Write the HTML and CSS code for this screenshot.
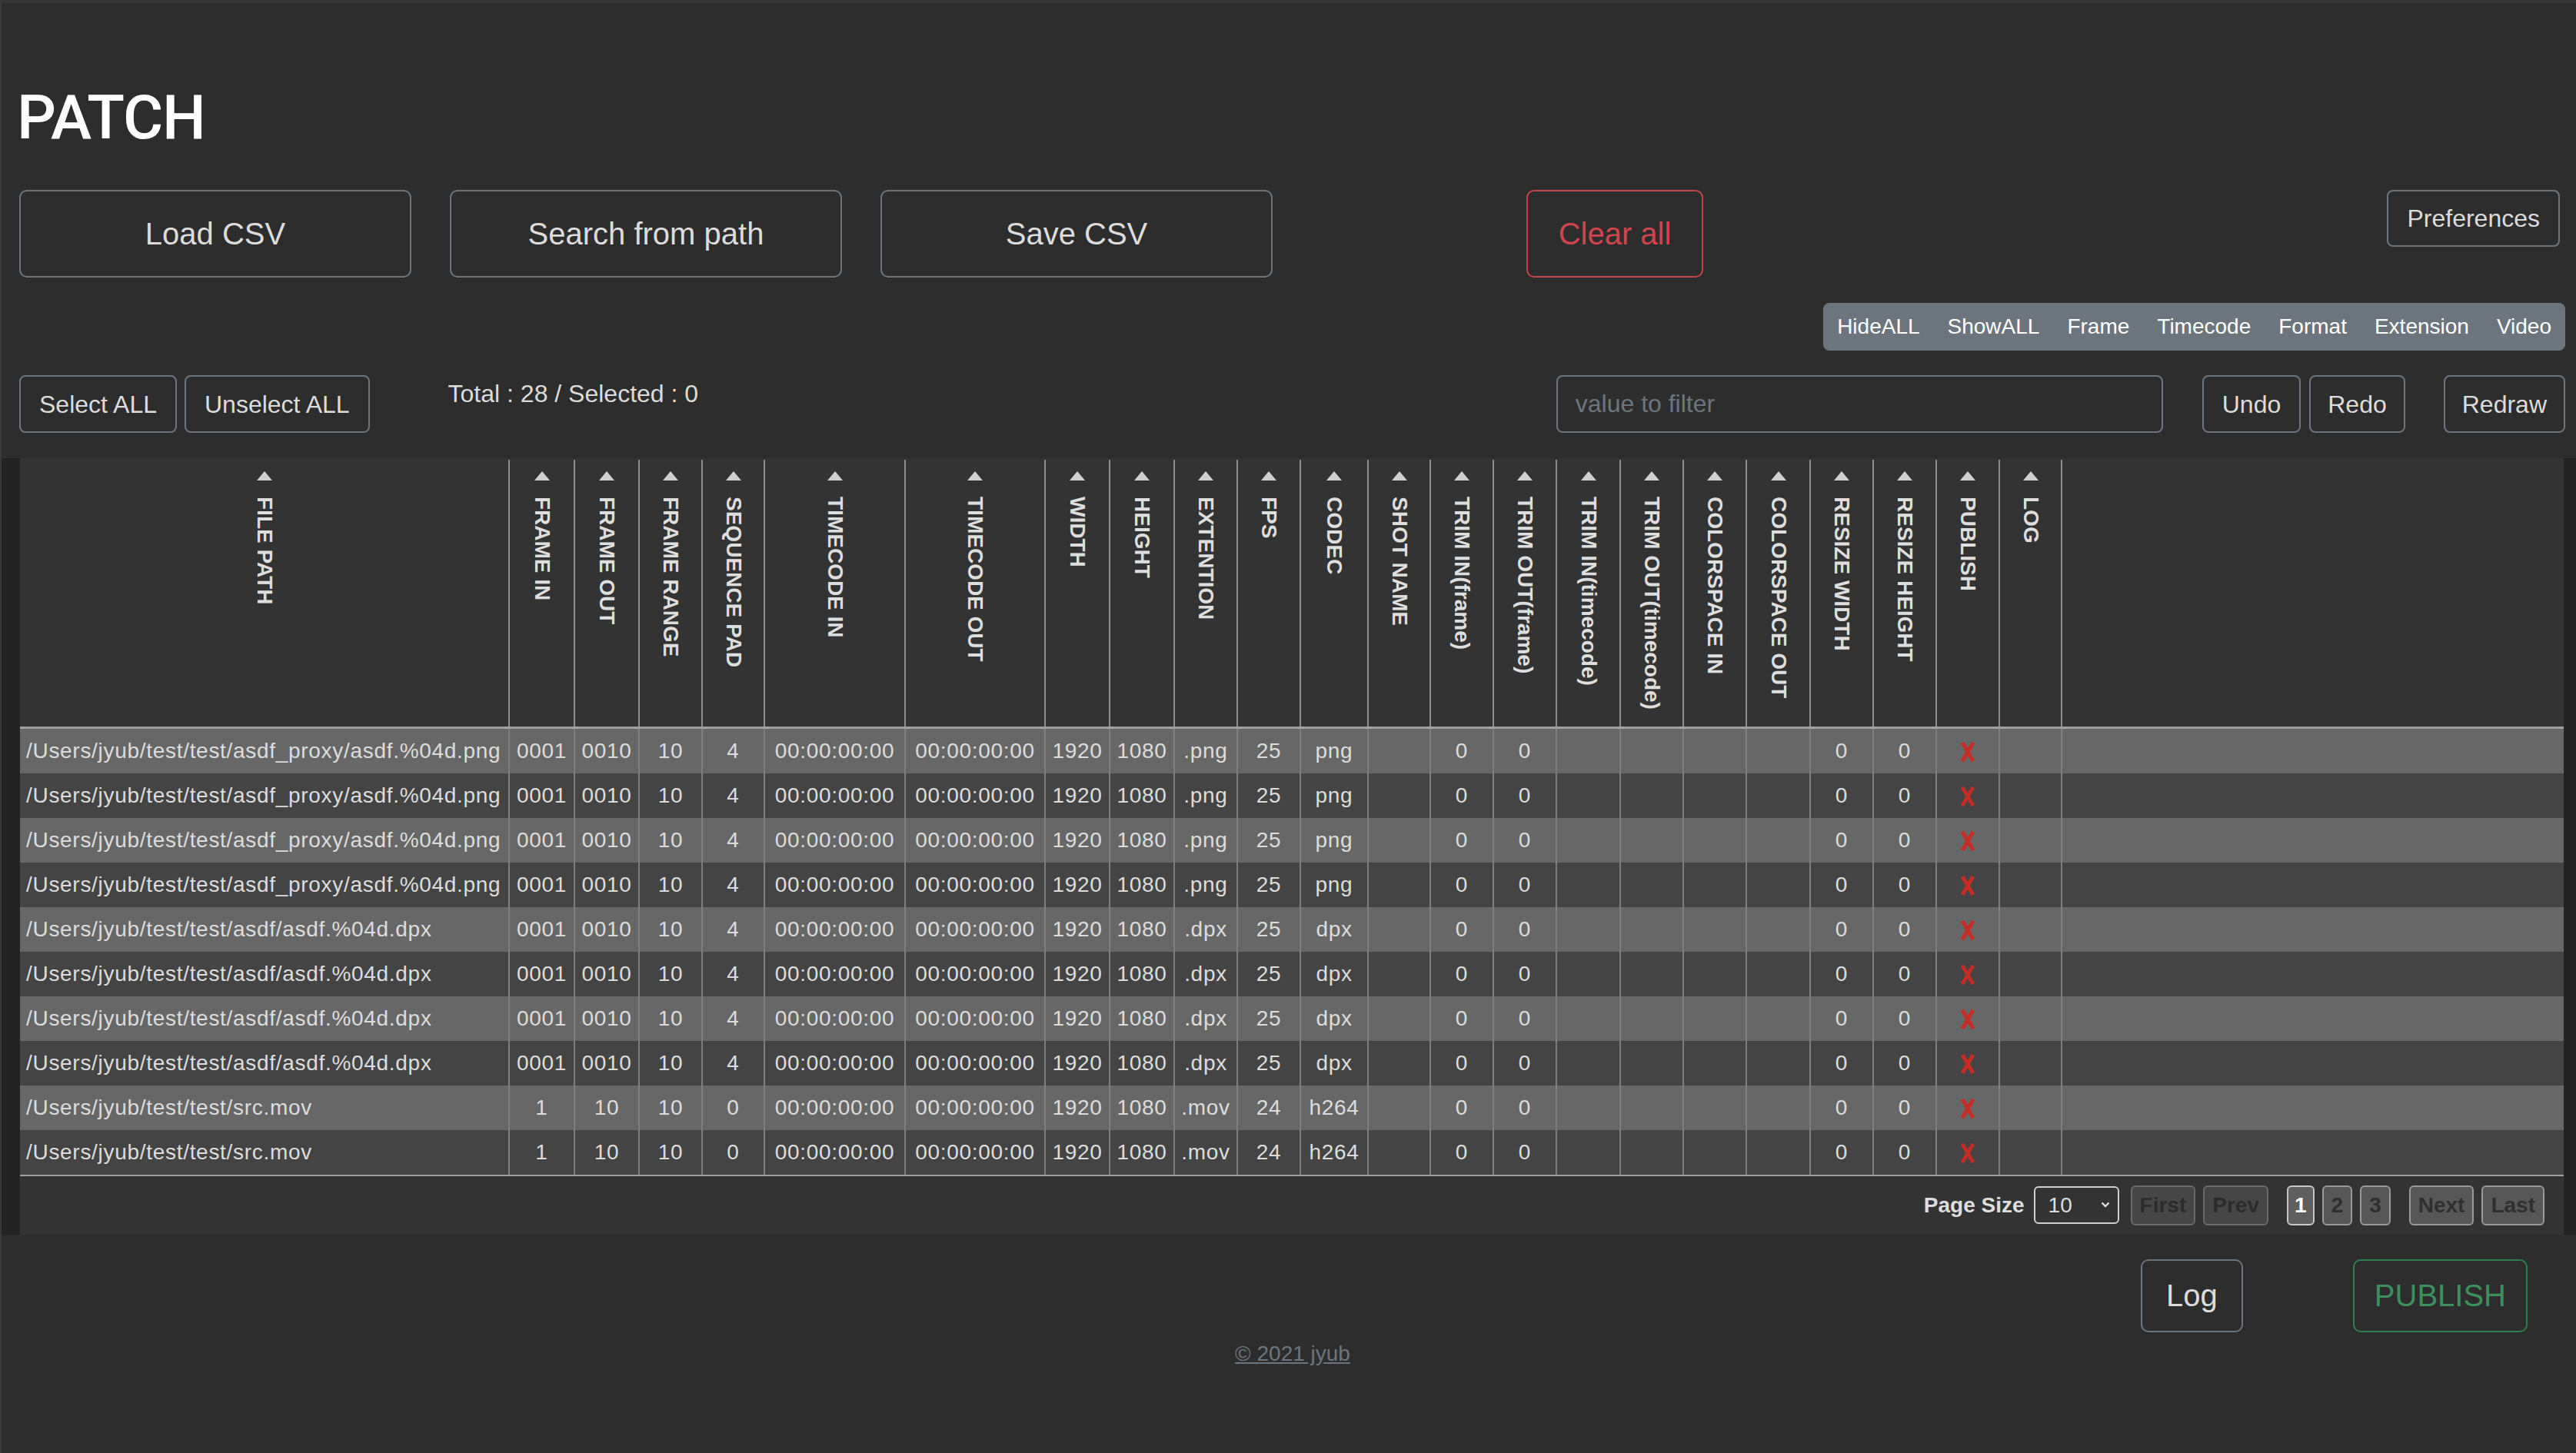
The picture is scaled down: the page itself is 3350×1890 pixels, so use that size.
FILE: index.html
```html
<!DOCTYPE html>
<html lang="en">
<head>
<meta charset="utf-8">
<title>PATCH</title>
<link rel="stylesheet" href="styles.css">
</head>
<body>
<div class="app">
  <div class="top">
    <h1 class="title">PATCH</h1>
    <div class="row-main">
      <button class="btn btn-main">Load CSV</button>
      <button class="btn btn-main">Search from path</button>
      <button class="btn btn-main">Save CSV</button>
      <button class="btn btn-main btn-danger">Clear all</button>
      <button class="btn btn-std btn-pref">Preferences</button>
    </div>
    <div class="row-group">
      <div class="group">
        <button class="gbtn">HideALL</button><button class="gbtn">ShowALL</button><button class="gbtn">Frame</button><button class="gbtn">Timecode</button><button class="gbtn">Format</button><button class="gbtn">Extension</button><button class="gbtn">Video</button>
      </div>
    </div>
    <div class="row-tools">
      <button class="btn btn-std">Select ALL</button>
      <button class="btn btn-std btn-unsel">Unselect ALL</button>
      <span class="total">Total : 28 / Selected : 0</span>
      <input class="filter" type="text" placeholder="value to filter">
      <button class="btn btn-std btn-undo">Undo</button>
      <button class="btn btn-std btn-redo">Redo</button>
      <button class="btn btn-std btn-redraw">Redraw</button>
    </div>
  </div>

  <div class="table-wrap">
    <div class="panel">
      <table class="grid">
        <colgroup>
          <col class="w-path"><col class="w85"><col class="w84"><col class="w82"><col class="w81"><col class="w183"><col class="w182"><col class="w84"><col class="w84"><col class="w82"><col class="w82"><col class="w88"><col class="w81"><col class="w82"><col class="w82"><col class="w83"><col class="w82"><col class="w82"><col class="w83"><col class="w82"><col class="w82"><col class="w82"><col class="w81"><col>
        </colgroup>
        <thead>
          <tr class="head-row">
            <th><div class="hd"><span class="caret"></span><span class="vt">FILE PATH</span></div></th>
            <th><div class="hd"><span class="caret"></span><span class="vt">FRAME IN</span></div></th>
            <th><div class="hd"><span class="caret"></span><span class="vt">FRAME OUT</span></div></th>
            <th><div class="hd"><span class="caret"></span><span class="vt">FRAME RANGE</span></div></th>
            <th><div class="hd"><span class="caret"></span><span class="vt">SEQUENCE PAD</span></div></th>
            <th><div class="hd"><span class="caret"></span><span class="vt">TIMECODE IN</span></div></th>
            <th><div class="hd"><span class="caret"></span><span class="vt">TIMECODE OUT</span></div></th>
            <th><div class="hd"><span class="caret"></span><span class="vt">WIDTH</span></div></th>
            <th><div class="hd"><span class="caret"></span><span class="vt">HEIGHT</span></div></th>
            <th><div class="hd"><span class="caret"></span><span class="vt">EXTENTION</span></div></th>
            <th><div class="hd"><span class="caret"></span><span class="vt">FPS</span></div></th>
            <th><div class="hd"><span class="caret"></span><span class="vt">CODEC</span></div></th>
            <th><div class="hd"><span class="caret"></span><span class="vt">SHOT NAME</span></div></th>
            <th><div class="hd"><span class="caret"></span><span class="vt">TRIM IN(frame)</span></div></th>
            <th><div class="hd"><span class="caret"></span><span class="vt">TRIM OUT(frame)</span></div></th>
            <th><div class="hd"><span class="caret"></span><span class="vt">TRIM IN(timecode)</span></div></th>
            <th><div class="hd"><span class="caret"></span><span class="vt">TRIM OUT(timecode)</span></div></th>
            <th><div class="hd"><span class="caret"></span><span class="vt">COLORSPACE IN</span></div></th>
            <th><div class="hd"><span class="caret"></span><span class="vt">COLORSPACE OUT</span></div></th>
            <th><div class="hd"><span class="caret"></span><span class="vt">RESIZE WIDTH</span></div></th>
            <th><div class="hd"><span class="caret"></span><span class="vt">RESIZE HEIGHT</span></div></th>
            <th><div class="hd"><span class="caret"></span><span class="vt">PUBLISH</span></div></th>
            <th><div class="hd"><span class="caret"></span><span class="vt">LOG</span></div></th>
            <th class="fill"></th>
          </tr>
        </thead>
        <tbody>
          <tr><td class="path">/Users/jyub/test/test/asdf_proxy/asdf.%04d.png</td><td>0001</td><td>0010</td><td>10</td><td>4</td><td>00:00:00:00</td><td>00:00:00:00</td><td>1920</td><td>1080</td><td>.png</td><td>25</td><td>png</td><td></td><td>0</td><td>0</td><td></td><td></td><td></td><td></td><td>0</td><td>0</td><td><svg class="xmark" viewBox="0 0 24 28"><path d="M5 2 L19 26 M19 2 L5 26"/></svg></td><td></td><td class="fill"></td></tr>
          <tr><td class="path">/Users/jyub/test/test/asdf_proxy/asdf.%04d.png</td><td>0001</td><td>0010</td><td>10</td><td>4</td><td>00:00:00:00</td><td>00:00:00:00</td><td>1920</td><td>1080</td><td>.png</td><td>25</td><td>png</td><td></td><td>0</td><td>0</td><td></td><td></td><td></td><td></td><td>0</td><td>0</td><td><svg class="xmark" viewBox="0 0 24 28"><path d="M5 2 L19 26 M19 2 L5 26"/></svg></td><td></td><td class="fill"></td></tr>
          <tr><td class="path">/Users/jyub/test/test/asdf_proxy/asdf.%04d.png</td><td>0001</td><td>0010</td><td>10</td><td>4</td><td>00:00:00:00</td><td>00:00:00:00</td><td>1920</td><td>1080</td><td>.png</td><td>25</td><td>png</td><td></td><td>0</td><td>0</td><td></td><td></td><td></td><td></td><td>0</td><td>0</td><td><svg class="xmark" viewBox="0 0 24 28"><path d="M5 2 L19 26 M19 2 L5 26"/></svg></td><td></td><td class="fill"></td></tr>
          <tr><td class="path">/Users/jyub/test/test/asdf_proxy/asdf.%04d.png</td><td>0001</td><td>0010</td><td>10</td><td>4</td><td>00:00:00:00</td><td>00:00:00:00</td><td>1920</td><td>1080</td><td>.png</td><td>25</td><td>png</td><td></td><td>0</td><td>0</td><td></td><td></td><td></td><td></td><td>0</td><td>0</td><td><svg class="xmark" viewBox="0 0 24 28"><path d="M5 2 L19 26 M19 2 L5 26"/></svg></td><td></td><td class="fill"></td></tr>
          <tr><td class="path">/Users/jyub/test/test/asdf/asdf.%04d.dpx</td><td>0001</td><td>0010</td><td>10</td><td>4</td><td>00:00:00:00</td><td>00:00:00:00</td><td>1920</td><td>1080</td><td>.dpx</td><td>25</td><td>dpx</td><td></td><td>0</td><td>0</td><td></td><td></td><td></td><td></td><td>0</td><td>0</td><td><svg class="xmark" viewBox="0 0 24 28"><path d="M5 2 L19 26 M19 2 L5 26"/></svg></td><td></td><td class="fill"></td></tr>
          <tr><td class="path">/Users/jyub/test/test/asdf/asdf.%04d.dpx</td><td>0001</td><td>0010</td><td>10</td><td>4</td><td>00:00:00:00</td><td>00:00:00:00</td><td>1920</td><td>1080</td><td>.dpx</td><td>25</td><td>dpx</td><td></td><td>0</td><td>0</td><td></td><td></td><td></td><td></td><td>0</td><td>0</td><td><svg class="xmark" viewBox="0 0 24 28"><path d="M5 2 L19 26 M19 2 L5 26"/></svg></td><td></td><td class="fill"></td></tr>
          <tr><td class="path">/Users/jyub/test/test/asdf/asdf.%04d.dpx</td><td>0001</td><td>0010</td><td>10</td><td>4</td><td>00:00:00:00</td><td>00:00:00:00</td><td>1920</td><td>1080</td><td>.dpx</td><td>25</td><td>dpx</td><td></td><td>0</td><td>0</td><td></td><td></td><td></td><td></td><td>0</td><td>0</td><td><svg class="xmark" viewBox="0 0 24 28"><path d="M5 2 L19 26 M19 2 L5 26"/></svg></td><td></td><td class="fill"></td></tr>
          <tr><td class="path">/Users/jyub/test/test/asdf/asdf.%04d.dpx</td><td>0001</td><td>0010</td><td>10</td><td>4</td><td>00:00:00:00</td><td>00:00:00:00</td><td>1920</td><td>1080</td><td>.dpx</td><td>25</td><td>dpx</td><td></td><td>0</td><td>0</td><td></td><td></td><td></td><td></td><td>0</td><td>0</td><td><svg class="xmark" viewBox="0 0 24 28"><path d="M5 2 L19 26 M19 2 L5 26"/></svg></td><td></td><td class="fill"></td></tr>
          <tr><td class="path">/Users/jyub/test/test/src.mov</td><td>1</td><td>10</td><td>10</td><td>0</td><td>00:00:00:00</td><td>00:00:00:00</td><td>1920</td><td>1080</td><td>.mov</td><td>24</td><td>h264</td><td></td><td>0</td><td>0</td><td></td><td></td><td></td><td></td><td>0</td><td>0</td><td><svg class="xmark" viewBox="0 0 24 28"><path d="M5 2 L19 26 M19 2 L5 26"/></svg></td><td></td><td class="fill"></td></tr>
          <tr><td class="path">/Users/jyub/test/test/src.mov</td><td>1</td><td>10</td><td>10</td><td>0</td><td>00:00:00:00</td><td>00:00:00:00</td><td>1920</td><td>1080</td><td>.mov</td><td>24</td><td>h264</td><td></td><td>0</td><td>0</td><td></td><td></td><td></td><td></td><td>0</td><td>0</td><td><svg class="xmark" viewBox="0 0 24 28"><path d="M5 2 L19 26 M19 2 L5 26"/></svg></td><td></td><td class="fill"></td></tr>
        </tbody>
      </table>
      <div class="pager">
        <span class="pg-label">Page Size</span>
        <span class="select-wrap">
          <select class="pg-select"><option>10</option><option>25</option><option>50</option></select>
          <svg class="chev" viewBox="0 0 12 8"><path d="M1.5 1.5 L6 6 L10.5 1.5"/></svg>
        </span>
        <button class="pg pg-off">First</button>
        <button class="pg pg-off">Prev</button>
        <button class="pg pg-num pg-active pg-gap">1</button>
        <button class="pg pg-num">2</button>
        <button class="pg pg-num">3</button>
        <button class="pg pg-gap">Next</button>
        <button class="pg">Last</button>
      </div>
    </div>
  </div>

  <div class="actions">
    <button class="btn btn-lg">Log</button>
    <button class="btn btn-lg btn-success">PUBLISH</button>
  </div>
  <footer class="footer"><a class="copy" href="#">© 2021 jyub</a></footer>
</div>
</body>
</html>
```

FILE: styles.css
```css
* { box-sizing: border-box; }

html, body { margin: 0; padding: 0; }

body {
  background: #2d2d2d;
  color: #dcdcdc;
  font-family: "Liberation Sans", Arial, sans-serif;
  width: 3350px;
}

.app {
  min-height: 1890px;
  border-top: 4px solid #363636;
  border-left: 2px solid #3a3a3a;
}

.top {
  padding: 101px 14px 0 23px;
}

.title {
  margin: 0 0 0 -3px;
  font-family: Roboto, "Liberation Sans", sans-serif;
  font-weight: 500;
  font-size: 80px;
  line-height: 96px;
  letter-spacing: -1px;
  color: #ffffff;
}

.btn {
  background: transparent;
  border: 2px solid #6c757d;
  color: #dcdcdc;
  font-family: "Liberation Sans", Arial, sans-serif;
  display: inline-flex;
  align-items: center;
  justify-content: center;
  white-space: nowrap;
  margin: 0;
  cursor: pointer;
}

.row-main {
  display: flex;
  align-items: flex-start;
  margin-top: 46px;
}

.btn-main {
  width: 510px;
  height: 114px;
  font-size: 40px;
  line-height: 60px;
  border-radius: 10px;
  margin-right: 50px;
}

.btn-danger {
  width: 230px;
  margin-left: 280px;
  margin-right: 0;
  border-color: #c9434b;
  color: #d2444c;
}

.btn-std {
  height: 75px;
  padding: 0 24px;
  font-size: 32px;
  line-height: 48px;
  border-radius: 8px;
}

.btn-pref {
  margin-left: auto;
  margin-right: 7px;
  height: 74px;
}

.row-group {
  display: flex;
  justify-content: flex-end;
  margin-top: 33px;
}

.group {
  display: flex;
}

.gbtn {
  height: 62px;
  padding: 0 16px;
  font-family: "Liberation Sans", Arial, sans-serif;
  font-size: 28px;
  line-height: 42px;
  background: #6c757d;
  border: 2px solid #6c757d;
  color: #ffffff;
  margin: 0;
}

.gbtn:first-child { border-radius: 8px 0 0 8px; }
.gbtn:last-child { border-radius: 0 8px 8px 0; }

.row-tools {
  display: flex;
  align-items: flex-start;
  margin-top: 32px;
}

.btn-unsel { margin-left: 10px; }

.total {
  margin-left: 102px;
  font-size: 32px;
  line-height: 48px;
  color: #dcdcdc;
}

.filter {
  margin-left: auto;
  width: 789px;
  height: 75px;
  padding: 0 23px;
  background: transparent;
  border: 2px solid #6c757d;
  border-radius: 8px;
  color: #dcdcdc;
  font-family: "Liberation Sans", Arial, sans-serif;
  font-size: 32px;
  outline: none;
}

.filter::placeholder { color: #6c757d; }

.btn-undo { margin-left: 51px; }
.btn-redo { margin-left: 11px; padding: 0 22px; }
.btn-redraw { margin-left: 50px; padding: 0 22px; }

/* table */
.table-wrap {
  margin-top: 33px;
  background: #232323;
  padding: 0 16px 0 24px;
}

.panel {
  background: #333333;
  padding-top: 2px;
}

.grid {
  width: 100%;
  table-layout: fixed;
  border-collapse: collapse;
}

.w-path { width: 636px; }
.w85 { width: 85px; }
.w84 { width: 84px; }
.w83 { width: 83px; }
.w82 { width: 82px; }
.w81 { width: 81px; }
.w88 { width: 88px; }
.w183 { width: 183px; }
.w182 { width: 182px; }

.head-row { height: 348px; }

.grid th {
  padding: 0;
  vertical-align: top;
  border-right: 2px solid #8e8e8e;
  border-bottom: 3px solid #a0a0a0;
  background: #333333;
}

.grid th.fill { border-right: none; }

.hd {
  display: flex;
  flex-direction: column;
  align-items: center;
  padding-top: 15px;
}

.caret {
  width: 0;
  height: 0;
  border-left: 10px solid transparent;
  border-right: 10px solid transparent;
  border-bottom: 12px solid #d0d0d0;
  margin-bottom: 21px;
}

.vt {
  writing-mode: vertical-rl;
  white-space: nowrap;
  font-family: "Liberation Sans", Arial, sans-serif;
  font-weight: bold;
  font-size: 28px;
  line-height: 30px;
  color: #dedede;
}

.grid td {
  height: 58px;
  padding: 8px;
  font-size: 28px;
  line-height: 42px;
  letter-spacing: 0.7px;
  text-align: center;
  white-space: nowrap;
  overflow: hidden;
  color: #dcdcdc;
  border-right: 2px solid #7e7e7e;
}

.grid td.path { text-align: left; }
.grid td.fill { border-right: none; }

.grid tbody tr:nth-child(odd) td { background: #676767; }
.grid tbody tr:nth-child(even) td { background: #444444; }
.grid tbody tr:last-child td { border-bottom: 2px solid #a0a0a0; }

.xmark {
  width: 24px;
  height: 28px;
  vertical-align: middle;
  fill: none;
  stroke: #c42c27;
  stroke-width: 5;
  stroke-linecap: butt;
}

/* pager */
.pager {
  display: flex;
  align-items: center;
  justify-content: flex-end;
  height: 76px;
  padding-right: 25px;
}

.pg-label {
  font-weight: bold;
  font-size: 28px;
  color: #dedede;
  margin-right: 12px;
}

.select-wrap {
  position: relative;
  display: inline-block;
  margin-right: 15px;
}

.pg-select {
  appearance: none;
  -webkit-appearance: none;
  width: 111px;
  height: 49px;
  padding: 0 0 0 17px;
  background: transparent;
  border: 2px solid #d0d0d0;
  border-radius: 6px;
  color: #dedede;
  font-family: "Liberation Sans", Arial, sans-serif;
  font-size: 28px;
  display: block;
}

.chev {
  position: absolute;
  right: 12px;
  top: 20px;
  width: 12px;
  height: 8px;
  fill: none;
  stroke: #e0e0e0;
  stroke-width: 2.4;
}

.pg {
  height: 52px;
  padding: 0 10px;
  margin: 0 0 0 10px;
  border-radius: 6px;
  font-family: "Liberation Sans", Arial, sans-serif;
  font-weight: bold;
  font-size: 28px;
  line-height: 42px;
  background: #575757;
  border: 2px solid #9a9a9a;
  color: #2f2f2f;
}

.select-wrap + .pg { margin-left: 0; }

.pg-off {
  background: #464646;
  border-color: #6a6a6a;
  color: #2c2c2c;
}

.pg-num { padding: 0 10px; }

.pg-active {
  padding: 0 8px;
  background: #5f5f5f;
  border-color: #c8c8c8;
  color: #ffffff;
}

.pg-gap { margin-left: 24px; }

/* actions */
.actions {
  display: flex;
  justify-content: flex-end;
  padding-right: 63px;
  margin-top: 32px;
}

.btn-lg {
  height: 95px;
  padding: 0 31px;
  font-size: 40px;
  line-height: 60px;
  border-radius: 10px;
}

.btn-success {
  margin-left: 143px;
  padding: 0 26px;
  border-color: #2e7e4f;
  color: #3d8f5d;
}

.footer {
  text-align: center;
  margin-top: 7px;
  padding-left: 10px;
}

.copy {
  font-size: 28px;
  line-height: 42px;
  color: #6c757d;
  text-decoration: underline;
}
```
